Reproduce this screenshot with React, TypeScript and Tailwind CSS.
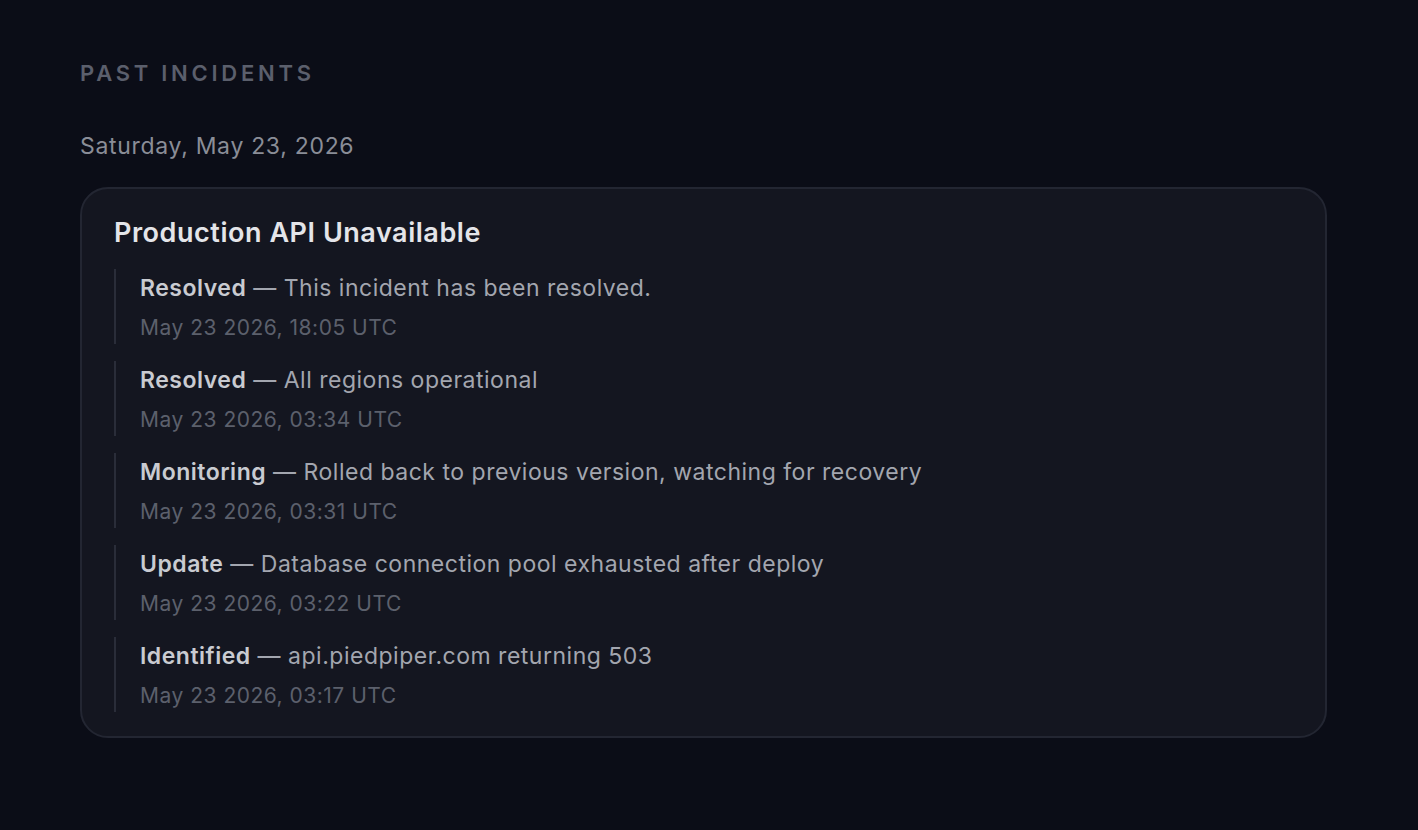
const updates = [
  { status: "Resolved", text: "This incident has been resolved.", time: "May 23 2026, 18:05 UTC" },
  { status: "Resolved", text: "All regions operational", time: "May 23 2026, 03:34 UTC" },
  { status: "Monitoring", text: "Rolled back to previous version, watching for recovery", time: "May 23 2026, 03:31 UTC" },
  { status: "Update", text: "Database connection pool exhausted after deploy", time: "May 23 2026, 03:22 UTC" },
  { status: "Identified", text: "api.piedpiper.com returning 503", time: "May 23 2026, 03:17 UTC" },
];

export default function App() {
  return (
    <div className="min-h-[830px] bg-[#0b0d17] px-20 pt-[58px] font-['Inter','Noto_Sans',sans-serif]">
      {/* Section heading */}
      <h2 className="text-[22px] leading-[30px] font-semibold tracking-[0.17em] text-[#5b5f6c]">
        PAST INCIDENTS
      </h2>

      <div className="mt-[42px] text-[23px] leading-[32px] tracking-[0.03em] text-[#8a8d97]">
        Saturday, May 23, 2026
      </div>

      {/* Incident card */}
      <div className="mt-[25px] w-[1247px] rounded-[28px] border-2 border-[#232632] bg-[#141620] px-[32px] pt-[26px] pb-[24px]">
        <h3 className="text-[27px] leading-[36px] font-semibold tracking-[0.02em] text-[#e4e5e9]">
          Production API Unavailable
        </h3>
        <div className="mt-[18px] flex flex-col gap-[17px]">
          {updates.map((u, i) => (
            <div key={i} className="border-l-2 border-[#2a2d39] pl-[24px] pt-[2px]">
              <div className="text-[23px] leading-[34px] tracking-[0.022em] text-[#a3a6af]">
                <span className="font-semibold text-[#c9cbd1]">{u.status}</span> — {u.text}
              </div>
              <div className="mt-[7px] text-[21px] leading-[32px] tracking-[0.024em] text-[#5c606c]">{u.time}</div>
            </div>
          ))}
        </div>
      </div>
    </div>
  );
}
